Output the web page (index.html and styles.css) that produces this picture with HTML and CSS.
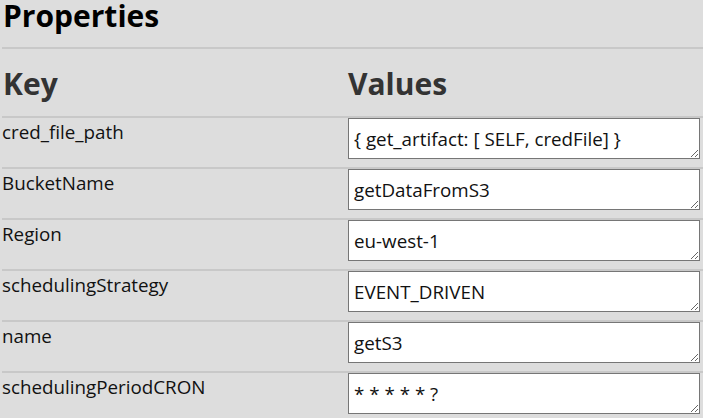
FILE: index.html
```html
<!DOCTYPE html>
<html>
<head>
<meta charset="utf-8">
<link rel="stylesheet" href="styles.css">
</head>
<body>
<div class="page">
  <h1 class="title">Properties</h1>
  <div class="table">
    <div class="row head">
      <div class="key">Key</div>
      <div class="val">Values</div>
    </div>
    <div class="row">
      <div class="key">cred_file_path</div>
      <div class="val"><textarea class="box">{ get_artifact: [ SELF, credFile] }</textarea></div>
    </div>
    <div class="row">
      <div class="key">BucketName</div>
      <div class="val"><textarea class="box">getDataFromS3</textarea></div>
    </div>
    <div class="row">
      <div class="key">Region</div>
      <div class="val"><textarea class="box">eu-west-1</textarea></div>
    </div>
    <div class="row">
      <div class="key">schedulingStrategy</div>
      <div class="val"><textarea class="box">EVENT_DRIVEN</textarea></div>
    </div>
    <div class="row">
      <div class="key">name</div>
      <div class="val"><textarea class="box">getS3</textarea></div>
    </div>
    <div class="row">
      <div class="key">schedulingPeriodCRON</div>
      <div class="val"><textarea class="box">* * * * * ?</textarea></div>
    </div>
  </div>
</div>
</body>
</html>
```
FILE: styles.css
```css
html, body {
  margin: 0;
  padding: 0;
  background: #dddddd;
}
body {
  font-family: "Open Sans", "Noto Sans", sans-serif;
  color: #111;
  overflow: hidden;
}
.page {
  padding-left: 2px;
}
.title {
  margin: 0;
  padding: 0 0 0 1px;
  height: 49px;
  box-sizing: border-box;
  border-bottom: 2px solid #c8c8c8;
  font-size: 30px;
  line-height: 31px;
  font-weight: 700;
  color: #000;
}
.table {
  display: flex;
  flex-direction: column;
}
.row {
  display: grid;
  grid-template-columns: 346px 1fr;
  height: 51px;
  box-sizing: border-box;
  border-top: 2px solid #c8c8c8;
}
.row.head {
  border-top: none;
  height: 67px;
  padding-top: 17px;
}
.head .key, .head .val {
  font-size: 30px;
  font-weight: 700;
  color: #333;
  line-height: 36px;
  padding: 0 0 0 1px;
}
.head .val { padding-left: 0; }
.key {
  font-size: 18.8px;
  line-height: 24px;
  padding: 2px 0 0 0;
  color: #111;
}
.box {
  display: block;
  width: 352px;
  height: 41px;
  box-sizing: border-box;
  margin: 0;
  border: 1px solid #767676;
  background: #fff;
  font-family: "Open Sans", "Noto Sans", sans-serif;
  font-size: 18.8px;
  line-height: 24px;
  color: #111;
  padding: 8px 5px 4px 5px;
  overflow: hidden;
  resize: both;
}
```
